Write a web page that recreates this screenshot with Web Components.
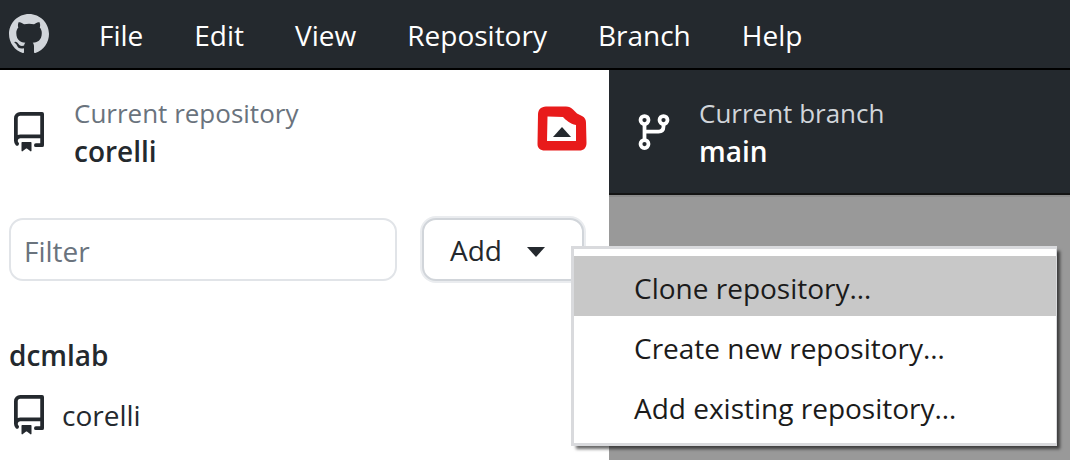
<!DOCTYPE html>
<html lang="en">
<head>
<meta charset="utf-8">
<title>Repository browser</title>
<style>
  body { margin: 0; font-family: "Open Sans", "Noto Sans", sans-serif; font-size: 28px; color: #24292e; }
</style>
</head>
<body>
<desktop-app></desktop-app>
<script>
const reset = `
  *, *::before { box-sizing: border-box; }
  button, input { font: inherit; color: inherit; margin: 0; padding: 0; border: 0; background: none; text-align: left; }
  svg { display: block; flex: none; }
`;

const define = (name, html) => customElements.define(name, class extends HTMLElement {
  constructor() {
    super();
    this.attachShadow({ mode: "open" }).innerHTML = html;
  }
});

const icons = {
  mark: '<path fill="currentColor" d="M8 0C3.58 0 0 3.58 0 8c0 3.54 2.29 6.53 5.47 7.59.4.07.55-.17.55-.38 0-.19-.01-.82-.01-1.49-2.01.37-2.53-.49-2.69-.94-.09-.23-.48-.94-.82-1.13-.28-.15-.68-.52-.01-.53.63-.01 1.08.58 1.23.82.72 1.21 1.87.87 2.33.66.07-.52.28-.87.51-1.07-1.78-.2-3.64-.89-3.64-3.95 0-.87.31-1.59.82-2.15-.08-.2-.36-1.02.08-2.12 0 0 .67-.21 2.2.82.64-.18 1.32-.27 2-.27.68 0 1.36.09 2 .27 1.53-1.04 2.2-.82 2.2-.82.44 1.1.16 1.92.08 2.12.51.56.82 1.27.82 2.15 0 3.07-1.87 3.75-3.65 3.95.29.25.54.73.54 1.48 0 1.07-.01 1.93-.01 2.2 0 .21.15.46.55.38A8.013 8.013 0 0016 8c0-4.42-3.58-8-8-8z"/>',
  repo: '<path fill="currentColor" fill-rule="evenodd" d="M2 2.5A2.5 2.5 0 014.5 0h8.75a.75.75 0 01.75.75v12.5a.75.75 0 01-.75.75h-2.5a.75.75 0 110-1.5h1.75v-2h-8a1 1 0 00-.714 1.7.75.75 0 01-1.072 1.05A2.495 2.495 0 012 11.5v-9zm10.5-1V9h-8c-.356 0-.694.074-1 .208V2.5a1 1 0 011-1h8zM5 12.25v3.25a.25.25 0 00.4.2l1.45-1.087a.25.25 0 01.3 0L8.6 15.7a.25.25 0 00.4-.2v-3.25a.25.25 0 00-.25-.25h-3.5a.25.25 0 00-.25.25z"/>',
  branch: '<g fill="none" stroke="currentColor" stroke-width="1.5"><circle cx="4.2" cy="3.2" r="1.6"/><circle cx="11.8" cy="3.2" r="1.6"/><circle cx="4.2" cy="12.8" r="1.6"/><path d="M4.2 4.8v6.4M4.2 7.8h5.6c1.3 0 2-.8 2-2v-1"/></g>'
};

customElements.define("app-icon", class extends HTMLElement {
  constructor() {
    super();
    this.attachShadow({ mode: "open" }).innerHTML = `
      <style>:host { display: block; flex: none; width: 40px; height: 40px; } svg { display: block; width: 100%; height: 100%; }</style>
      <svg viewBox="0 0 16 16" aria-hidden="true"></svg>`;
  }
  connectedCallback() {
    this.shadowRoot.querySelector("svg").innerHTML = icons[this.getAttribute("name")];
  }
});

define("menu-bar", `
  <style>${reset}
    :host { display: flex; align-items: center; height: 70px; padding: 0 9px; background: #24292e; border-bottom: 2px solid #000; box-sizing: border-box; color: #fff; }
    app-icon { color: #d1d5da; }
    nav { display: flex; gap: 51px; margin-left: 50px; padding-top: 2px; }
  </style>
  <app-icon name="mark"></app-icon>
  <nav aria-label="Application menu"><slot></slot></nav>`);

define("menu-title", `
  <style>${reset} :host { display: block; } button { line-height: 40px; white-space: nowrap; }</style>
  <button type="button"><slot></slot></button>`);

define("toolbar-item", `
  <style>${reset}
    :host { display: flex; align-items: center; height: 125px; padding: 0 22px 2px 9px; box-sizing: border-box; }
    button { display: flex; align-items: center; flex: 1; min-width: 0; gap: 25px; }
    .text { display: grid; min-width: 0; line-height: 38px; white-space: nowrap; }
    .label { font-size: 26px; color: var(--label, #6a737d); }
    .value { font-size: 28px; font-weight: 600; }
    .end { margin-left: auto; padding-bottom: 6px; }
  </style>
  <button type="button">
    <slot name="icon"></slot>
    <span class="text"><span class="label"><slot name="label"></slot></span><span class="value"><slot></slot></span></span>
    <span class="end"><slot name="end"></slot></span>
  </button>`);

define("marked-caret", `
  <style>${reset} :host { display: block; }</style>
  <svg width="50" height="46" viewBox="0 0 50 46" aria-hidden="true">
    <path fill="#e81b1b" d="M9 .5h20c3 0 5 1 7 3l4 4 5 2.500c3 1.500 4 4 4 7l.5 20c0 5-3 7.500-7 7.500H8C3 44.500.5 42 .5 38L1 8C1.500 3 4 1 9 .5z"/>
    <path fill="#fff" d="M10.500 10.500L26 11c3 3 7 7 13 8v16H10z"/>
    <path fill="#24292e" d="M16 31l9-10 9 10z"/>
  </svg>`);

define("context-menu", `
  <style>${reset}
    :host { display: block; padding: 7px 0; background: #fff; border: solid #d9dadd; border-width: 3px 1px 3px 3px; box-shadow: 4px 4px 3px -1px rgba(0,0,0,.6); box-sizing: border-box; color: #1b1b1b; }
  </style>
  <div role="menu"><slot></slot></div>`);

define("context-item", `
  <style>${reset}
    :host { display: block; }
    :host([selected]) { background: #c8c8c8; }
    button { display: block; width: 100%; padding: 4px 60px 0; line-height: 56px; white-space: nowrap; }
  </style>
  <button type="button" role="menuitem"><slot></slot></button>`);

define("add-button", `
  <style>${reset}
    :host { display: block; position: relative; width: 162px; flex: none; }
    button { display: flex; align-items: center; gap: 25px; width: 100%; height: 63px; padding: 0 26px; background: #fff; border: 2px solid #d1d5da; border-radius: 14px; box-shadow: 0 0 0 2px #eaecef; }
    svg { margin-top: 4px; }
    ::slotted(context-menu) { position: absolute; z-index: 1; left: 149px; top: 28px; width: 486px; }
  </style>
  <button type="button" aria-haspopup="menu" aria-expanded="true">Add
    <svg width="18" height="10" viewBox="0 0 18 10" aria-hidden="true"><path fill="currentColor" d="M0 0h18L9 10z"/></svg>
  </button>
  <slot></slot>`);

define("filter-box", `
  <style>${reset}
    :host { display: block; flex: 1; min-width: 0; }
    input { display: block; width: 100%; height: 63px; padding: 3px 13px 0; background: #fff; border: 2px solid #e1e4e8; border-radius: 14px; }
    input::placeholder { color: #6a737d; opacity: 1; }
  </style>
  <input type="text" placeholder="Filter" aria-label="Filter">`);

define("repo-group", `
  <style>${reset}
    :host { display: block; padding: 0 9px; }
    h2 { margin: 0; font-size: 28px; font-weight: 600; line-height: 60px; }
  </style>
  <h2><slot name="title"></slot></h2>
  <slot></slot>`);

define("repo-row", `
  <style>${reset}
    :host { display: block; }
    button { display: flex; align-items: center; gap: 13px; width: 100%; height: 60px; }
  </style>
  <button type="button"><app-icon name="repo"></app-icon><slot></slot></button>`);

define("desktop-app", `
  <style>${reset}
    :host { display: flex; flex-direction: column; min-height: 100vh; overflow: hidden; }
    main { flex: 1; display: grid; grid-template-columns: minmax(0, 609fr) minmax(0, 461fr); background: #999; }
    .repos { background: #fff; }
    .tools { display: flex; gap: 25px; padding: 23px 25px 44px 9px; }
    .branch { --label: #d1d5da; padding-left: 25px; padding-bottom: 0; background: #24292e; color: #fff; border-bottom: 2px solid #141414; box-shadow: 0 2px #8c8c8c; }
  </style>
  <menu-bar>
    <menu-title>File</menu-title><menu-title>Edit</menu-title><menu-title>View</menu-title>
    <menu-title>Repository</menu-title><menu-title>Branch</menu-title><menu-title>Help</menu-title>
  </menu-bar>
  <main>
    <section class="repos">
      <toolbar-item>
        <app-icon slot="icon" name="repo"></app-icon>
        <span slot="label">Current repository</span>corelli
        <marked-caret slot="end"></marked-caret>
      </toolbar-item>
      <div class="tools">
        <filter-box></filter-box>
        <add-button>
          <context-menu>
            <context-item selected>Clone repository…</context-item>
            <context-item>Create new repository…</context-item>
            <context-item>Add existing repository…</context-item>
          </context-menu>
        </add-button>
      </div>
      <repo-group><span slot="title">dcmlab</span><repo-row>corelli</repo-row></repo-group>
    </section>
    <section>
      <toolbar-item class="branch">
        <app-icon slot="icon" name="branch"></app-icon>
        <span slot="label">Current branch</span>main
      </toolbar-item>
    </section>
  </main>`);
</script>
</body>
</html>
